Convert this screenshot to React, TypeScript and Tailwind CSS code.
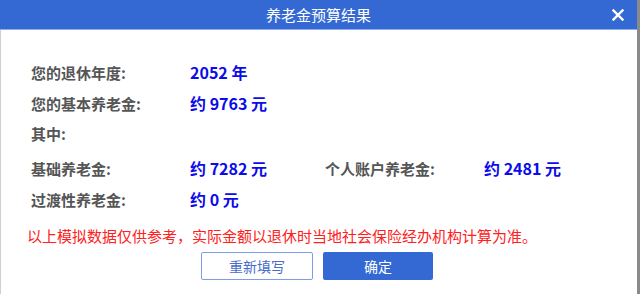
import React from 'react'

const FONT = "font-['Noto_Sans_CJK_SC','Noto_Sans',sans-serif]"

function Label({ children }: { children: React.ReactNode }) {
  return <span className="text-[15px] font-bold text-[#555555] leading-none">{children}</span>
}

function Value({ children }: { children: React.ReactNode }) {
  return <span className="text-[16px] font-bold text-[#0b0bec] leading-none">{children}</span>
}

export default function App() {
  return (
    <div className={`w-[640px] h-[294px] flex bg-[#8a8a8a] ${FONT}`}>
      <div className="w-[637px] h-full bg-white flex flex-col">
        <div className="h-[30px] shrink-0 bg-[#3469d4] border-b border-[#8eacec] relative flex items-center justify-center">
          <span className="text-[15px] text-white leading-none">养老金预算结果</span>
          <button className="absolute right-[13px] top-[8px] w-[13px] h-[13px] flex items-center justify-center">
            <svg width="12" height="12" viewBox="0 0 12 12">
              <path d="M1.5 1.5 L10.5 10.5 M10.5 1.5 L1.5 10.5" stroke="white" strokeWidth="2.4" strokeLinecap="square" />
            </svg>
          </button>
        </div>

        <div className="flex-1 border-l border-[#cfcfcf] flex flex-col">
          <div className="pl-[30px] pt-[26px] flex flex-col">
            <div className="h-[31px] flex items-center">
              <div className="w-[159px]"><Label>您的退休年度:</Label></div>
              <Value>2052 年</Value>
            </div>
            <div className="h-[31px] flex items-center">
              <div className="w-[159px]"><Label>您的基本养老金:</Label></div>
              <Value>约 9763 元</Value>
            </div>
            <div className="h-[31px] flex items-center">
              <Label>其中:</Label>
            </div>
            <div className="h-[31px] mt-[3px] flex items-center">
              <div className="w-[159px]"><Label>基础养老金:</Label></div>
              <div className="w-[135px]"><Value>约 7282 元</Value></div>
              <div className="w-[159px]"><Label>个人账户养老金:</Label></div>
              <Value>约 2481 元</Value>
            </div>
            <div className="h-[31px] flex items-center">
              <div className="w-[159px]"><Label>过渡性养老金:</Label></div>
              <Value>约 0 元</Value>
            </div>
          </div>

          <p className="pl-[26px] mt-[11px] h-[21px] flex items-center text-[15px] text-[#ff2020] leading-none">
            以上模拟数据仅供参考，实际金额以退休时当地社会保险经办机构计算为准。
          </p>

          <div className="mt-[6px] flex justify-center gap-[10px] pr-[4px]">
            <button className="w-[112px] h-[28px] rounded-[2px] border border-[#7f9ce6] bg-white text-[14px] text-[#4a6ccc] leading-none">
              重新填写
            </button>
            <button className="w-[110px] h-[28px] rounded-[2px] bg-[#3469d4] text-[14px] text-white leading-none">
              确定
            </button>
          </div>
        </div>
      </div>
    </div>
  )
}
